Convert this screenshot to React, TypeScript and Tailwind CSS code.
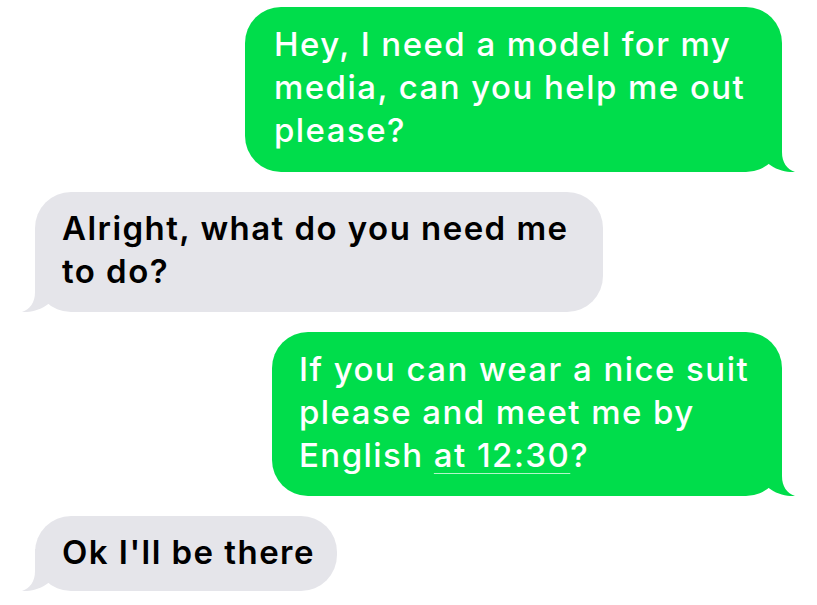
import React from "react";

const GREEN = "#00DD4B";

function TailRight({ color }: { color: string }) {
  return (
    <svg
      className="absolute bottom-0 right-[-13px]"
      width="48"
      height="42"
      viewBox="0 0 48 42"
    >
      <path
        d="M23,0 L35,0 L35,22 C35,33 40,39 48,42 C40,42.6 29,40 21,33.5 L3,20 Z"
        fill={color}
      />
    </svg>
  );
}

function TailLeft({ color }: { color: string }) {
  return (
    <svg
      className="absolute bottom-0 left-[-13px]"
      width="48"
      height="42"
      viewBox="0 0 48 42"
    >
      <path
        d="M25,0 L13,0 L13,22 C13,33 8,39 0,42 C8,42.6 19,40 27,33.5 L45,20 Z"
        fill={color}
      />
    </svg>
  );
}

export default function App() {
  return (
    <div
      className="w-[817px] h-[605px] bg-white flex flex-col pt-[7px] gap-[20px] overflow-hidden"
      style={{ fontFamily: "Inter, 'Liberation Sans', sans-serif" }}
    >
      <div className="flex justify-end pr-[35px]">
        <div className="relative w-[537px] h-[165px] rounded-[36px] bg-[#00DD4B] pl-[29px] pt-[16px] text-white text-[33px] leading-[43px] font-medium tracking-[1.45px] whitespace-nowrap">
          Hey, I need a model for my
          <br />
          media, can you help me out
          <br />
          please?
          <TailRight color={GREEN} />
        </div>
      </div>

      <div className="flex justify-start pl-[35px]">
        <div className="relative w-[568px] h-[120px] rounded-[36px] bg-[#E5E5EA] pl-[27px] pt-[15px] text-black text-[33px] leading-[43px] font-semibold tracking-[1.45px] whitespace-nowrap">
          Alright, what do you need me
          <br />
          to do?
          <TailLeft color="#E5E5EA" />
        </div>
      </div>

      <div className="flex justify-end pr-[35px]">
        <div className="relative w-[510px] h-[164px] rounded-[36px] bg-[#00DD4B] pl-[27px] pt-[16px] text-white text-[33px] leading-[43px] font-medium tracking-[1.45px] whitespace-nowrap">
          If you can wear a nice suit
          <br />
          please and meet me by
          <br />
          English{" "}
          <span className="underline decoration-1 decoration-white/70 underline-offset-[6px]">
            at 12:30
          </span>
          ?
          <TailRight color={GREEN} />
        </div>
      </div>

      <div className="flex justify-start pl-[35px]">
        <div className="relative w-[302px] h-[75px] rounded-[36px] bg-[#E5E5EA] pl-[27px] pt-[15px] text-black text-[33px] leading-[43px] font-semibold tracking-[1.45px] whitespace-nowrap">
          Ok I'll be there
          <TailLeft color="#E5E5EA" />
        </div>
      </div>
    </div>
  );
}
